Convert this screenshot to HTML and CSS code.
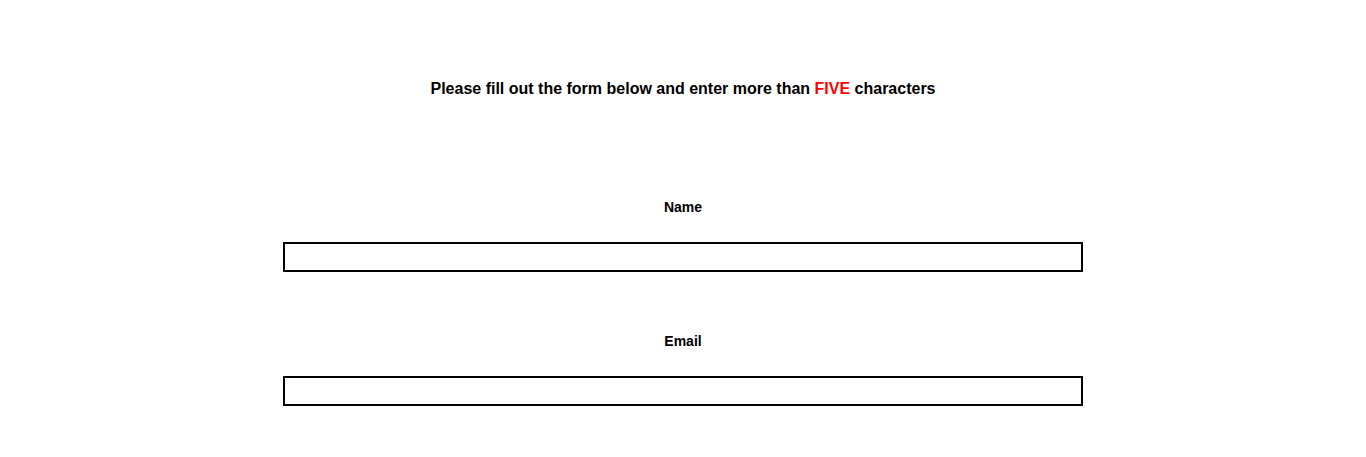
FILE: index.html
```html
<!DOCTYPE html>
<html>
<head>
<meta charset="utf-8">
<link rel="stylesheet" href="styles.css">
</head>
<body>
<main class="page">
  <h3 class="title">Please fill out the form below and enter more than <span class="accent">FIVE</span> characters</h3>
  <form class="form">
    <div class="field">
      <label class="label" for="name">Name</label>
      <input class="input" id="name" type="text">
    </div>
    <div class="field">
      <label class="label" for="email">Email</label>
      <input class="input" id="email" type="text">
    </div>
  </form>
</main>
</body>
</html>
```
FILE: styles.css
```css
html, body {
  margin: 0;
  padding: 0;
  background: #fff;
}
.page {
  display: flex;
  flex-direction: column;
  align-items: center;
  font-family: "Liberation Sans", Arial, sans-serif;
  color: #000;
}
.title {
  margin: 80px 0 0;
  font-size: 16px;
  line-height: 18px;
  font-weight: bold;
  text-align: center;
}
.accent {
  color: #ff0000;
}
.form {
  display: flex;
  flex-direction: column;
  gap: 61px;
  margin-top: 101px;
  width: 800px;
}
.field {
  display: flex;
  flex-direction: column;
  align-items: center;
  gap: 27px;
}
.label {
  font-size: 14px;
  line-height: 16px;
  font-weight: bold;
}
.input {
  box-sizing: border-box;
  width: 800px;
  height: 30px;
  margin: 0;
  border: 2px solid #000;
  padding: 0 4px;
  background: #fff;
  outline: none;
}
```
